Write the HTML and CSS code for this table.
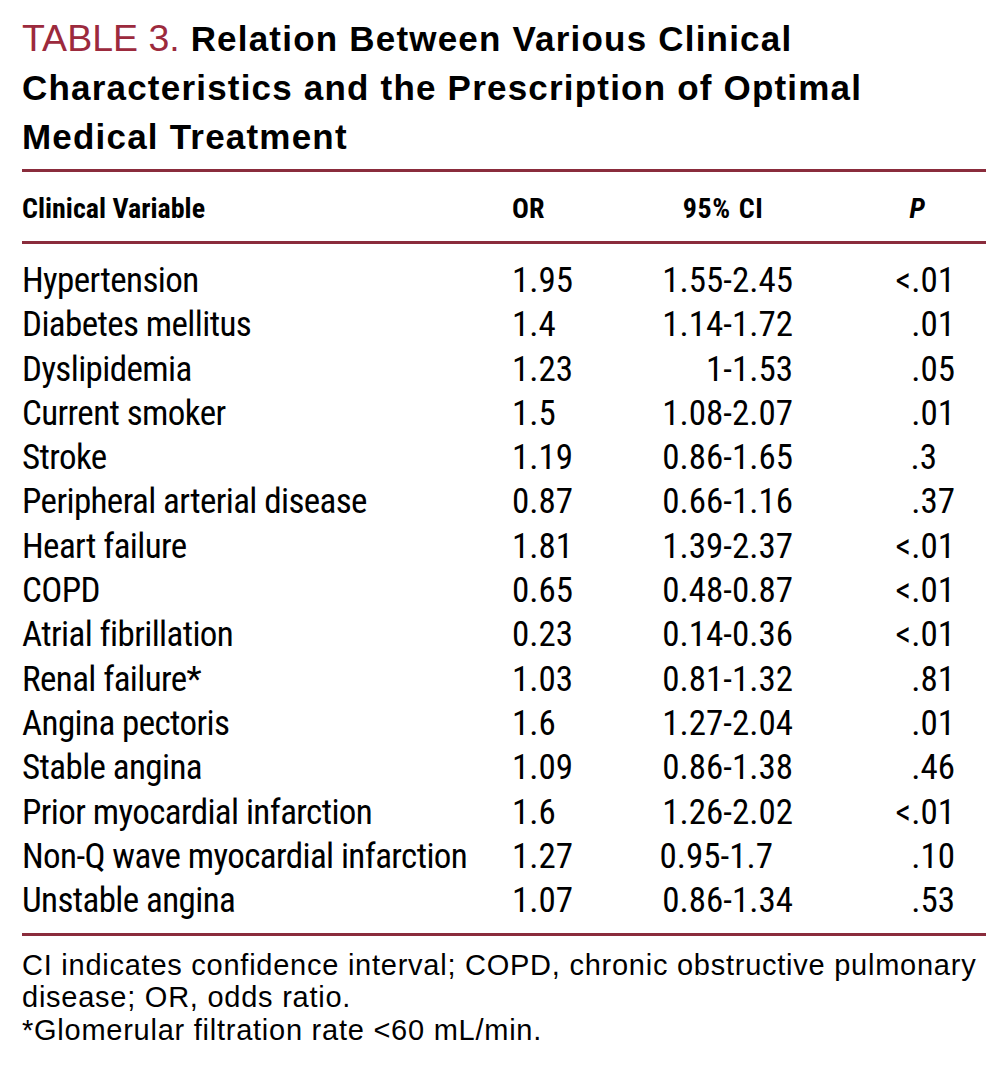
FILE: index.html
```html
<!DOCTYPE html>
<html lang="en">
<head>
<meta charset="utf-8">
<title>Table 3</title>
<link rel="stylesheet" href="styles.css">
</head>
<body>
<div class="page">
  <h1 class="title"><span class="label">TABLE 3.</span> Relation Between Various Clinical Characteristics and the Prescription of Optimal Medical Treatment</h1>
  <div class="table">
    <div class="row head">
      <div class="c-var">Clinical Variable</div>
      <div class="c-or">OR</div>
      <div class="c-ci">95% CI</div>
      <div class="c-p"><i>P</i></div>
    </div>
    <div class="body">
      <div class="row"><div class="c-var">Hypertension</div><div class="c-or">1.95</div><div class="c-ci">1.55-2.45</div><div class="c-p">&lt;.01</div></div>
      <div class="row"><div class="c-var">Diabetes mellitus</div><div class="c-or">1.4</div><div class="c-ci">1.14-1.72</div><div class="c-p">.01</div></div>
      <div class="row"><div class="c-var">Dyslipidemia</div><div class="c-or">1.23</div><div class="c-ci">1-1.53</div><div class="c-p">.05</div></div>
      <div class="row"><div class="c-var">Current smoker</div><div class="c-or">1.5</div><div class="c-ci">1.08-2.07</div><div class="c-p">.01</div></div>
      <div class="row"><div class="c-var">Stroke</div><div class="c-or">1.19</div><div class="c-ci">0.86-1.65</div><div class="c-p short">.3</div></div>
      <div class="row"><div class="c-var">Peripheral arterial disease</div><div class="c-or">0.87</div><div class="c-ci">0.66-1.16</div><div class="c-p">.37</div></div>
      <div class="row"><div class="c-var">Heart failure</div><div class="c-or">1.81</div><div class="c-ci">1.39-2.37</div><div class="c-p">&lt;.01</div></div>
      <div class="row"><div class="c-var">COPD</div><div class="c-or">0.65</div><div class="c-ci">0.48-0.87</div><div class="c-p">&lt;.01</div></div>
      <div class="row"><div class="c-var">Atrial fibrillation</div><div class="c-or">0.23</div><div class="c-ci">0.14-0.36</div><div class="c-p">&lt;.01</div></div>
      <div class="row"><div class="c-var">Renal failure*</div><div class="c-or">1.03</div><div class="c-ci">0.81-1.32</div><div class="c-p">.81</div></div>
      <div class="row"><div class="c-var">Angina pectoris</div><div class="c-or">1.6</div><div class="c-ci">1.27-2.04</div><div class="c-p">.01</div></div>
      <div class="row"><div class="c-var">Stable angina</div><div class="c-or">1.09</div><div class="c-ci">0.86-1.38</div><div class="c-p">.46</div></div>
      <div class="row"><div class="c-var">Prior myocardial infarction</div><div class="c-or">1.6</div><div class="c-ci">1.26-2.02</div><div class="c-p">&lt;.01</div></div>
      <div class="row"><div class="c-var">Non-Q wave myocardial infarction</div><div class="c-or">1.27</div><div class="c-ci short">0.95-1.7</div><div class="c-p">.10</div></div>
      <div class="row"><div class="c-var">Unstable angina</div><div class="c-or">1.07</div><div class="c-ci">0.86-1.34</div><div class="c-p">.53</div></div>
    </div>
  </div>
  <div class="notes">
    <p>CI indicates confidence interval; COPD, chronic obstructive pulmonary disease; OR, odds ratio.</p>
    <p>*Glomerular filtration rate &lt;60 mL/min.</p>
  </div>
</div>
</body>
</html>
```

FILE: styles.css
```css
html, body {
  margin: 0;
  padding: 0;
  background: #ffffff;
}

.page {
  width: 964px;
  padding: 13.5px 0 0 22px;
  color: #000;
}

.title {
  width: 900px;
  margin: 0 0 8.5px 0;
  font-family: "Liberation Sans", Arial, sans-serif;
  font-size: 35px;
  line-height: 49px;
  letter-spacing: 1.2px;
  font-weight: bold;
  color: #000;
}

.title .label {
  font-size: 37.5px;
  line-height: 46px;
  letter-spacing: 0;
  font-weight: normal;
  color: #9c2a3d;
}

.table {
  border-top: 3px solid #8a2c3c;
  border-bottom: 3px solid #8a2c3c;
  font-family: Roboto, "Liberation Sans", sans-serif;
  font-stretch: 75%;
}

.row {
  display: grid;
  grid-template-columns: 490px 128px 153px 162px;
  white-space: nowrap;
}

.row.head {
  padding: 21.5px 0 17.5px 0;
  border-bottom: 3px solid #8a2c3c;
  font-size: 28px;
  font-weight: bold;
  line-height: 30px;
}

.body {
  padding: 15px 0 9.5px 0;
  font-size: 35px;
  line-height: 44.3px;
}

.body .c-var {
  letter-spacing: -0.6px;
}

.c-or { text-align: left; }
.c-ci { text-align: right; }
.c-p { text-align: right; }

.head .c-ci {
  text-align: center;
  padding-left: 13px;
  letter-spacing: 0.6px;
  word-spacing: 1px;
}

.head .c-p {
  padding-right: 30px;
}

.c-ci.short { padding-right: 20px; }
.c-p.short { padding-right: 18px; }

.notes {
  padding-top: 13px;
  font-family: "Liberation Sans", Arial, sans-serif;
  font-size: 29px;
  line-height: 32.5px;
  letter-spacing: 0.75px;
}

.notes p {
  margin: 0;
}
```
